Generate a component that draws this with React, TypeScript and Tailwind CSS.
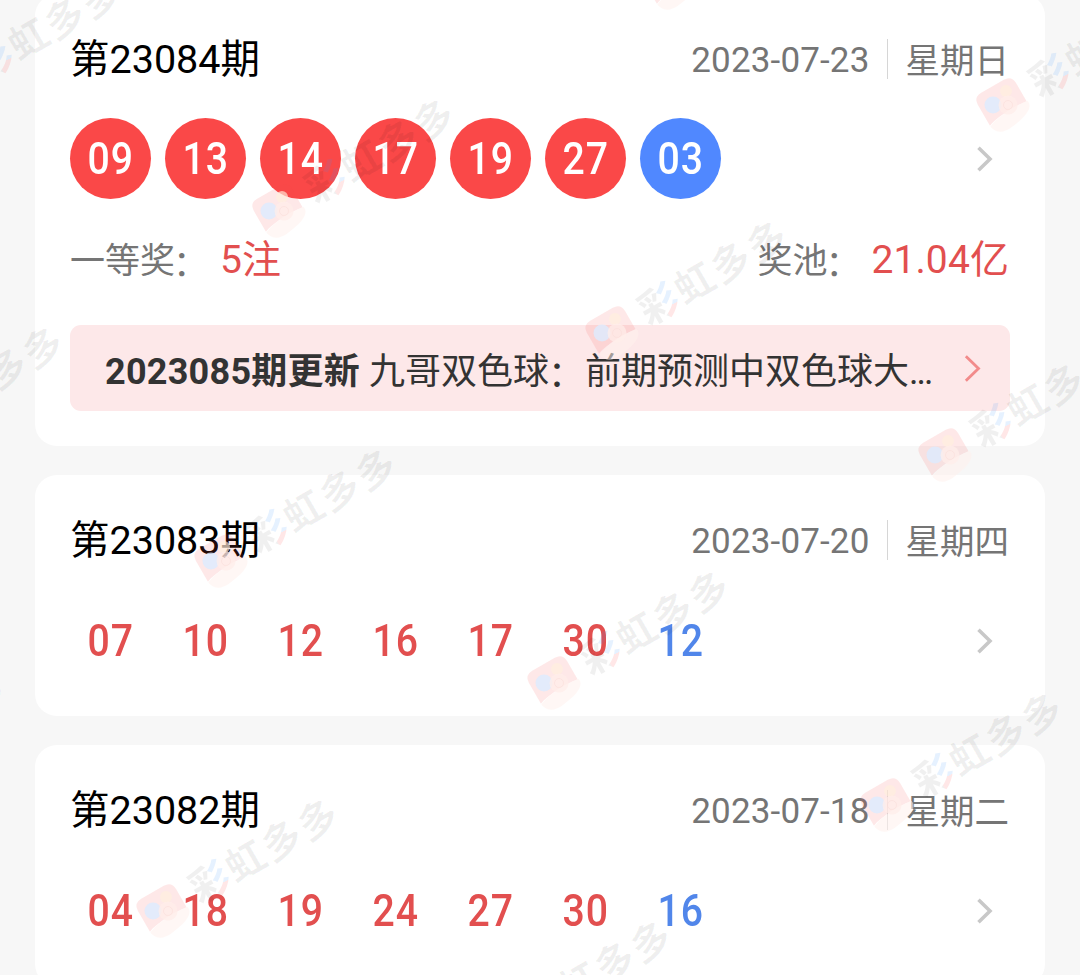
import React from "react";

type Draw = {
  issue: string;
  date: string;
  weekday: string;
  red: string[];
  blue: string;
};

const latest: Draw = {
  issue: "第23084期",
  date: "2023-07-23",
  weekday: "星期日",
  red: ["09", "13", "14", "17", "19", "27"],
  blue: "03",
};

const history: Draw[] = [
  {
    issue: "第23083期",
    date: "2023-07-20",
    weekday: "星期四",
    red: ["07", "10", "12", "16", "17", "30"],
    blue: "12",
  },
  {
    issue: "第23082期",
    date: "2023-07-18",
    weekday: "星期二",
    red: ["04", "18", "19", "24", "27", "30"],
    blue: "16",
  },
];

function Chevron({ className }: { className: string }) {
  return (
    <svg viewBox="0 0 18 30" className={className} fill="none" stroke="currentColor">
      <path d="M2.5 3.8 L14 15 L2.5 26.2" />
    </svg>
  );
}

function DrawHeader({ draw }: { draw: Draw }) {
  return (
    <div className="flex h-[50px] items-center justify-between">
      <h2 className="pt-[2px] text-[39.5px] leading-[50px] text-black">{draw.issue}</h2>
      <div className="flex items-center text-[35px] leading-[50px] text-[#757575]">
        <span className="pt-[4px] tracking-[0.15px]">{draw.date}</span>
        <span className="mr-[18px] ml-[17px] h-10 w-px bg-[#d6d6d6]" />
        <span className="mr-[1px] pt-[4px] text-[34.5px]">{draw.weekday}</span>
      </div>
    </div>
  );
}

function Numbers({ draw, filled }: { draw: Draw; filled?: boolean }) {
  const base =
    "flex size-[81px] items-center justify-center rounded-full text-[43.5px] font-medium leading-none tracking-[1px]";
  const red = filled ? "bg-[#fa4848] text-white" : "text-[#e24f4f]";
  const blue = filled ? "bg-[#5088ff] text-white" : "text-[#5186ea]";
  return (
    <div className="flex items-center justify-between">
      <div className="flex gap-[14px]">
        {draw.red.map((n) => (
          <span key={n} className={`${base} ${red}`}>
            <span className="scale-x-90 pt-[3px] pl-[1px]">{n}</span>
          </span>
        ))}
        <span className={`${base} ${blue}`}>
          <span className="scale-x-90 pt-[3px] pl-[1px]">{draw.blue}</span>
        </span>
      </div>
      <Chevron className="mr-[16px] h-[30px] w-[18px] stroke-[3.6] text-[#c8c8c8]" />
    </div>
  );
}

function WatermarkLogo() {
  return (
    <svg viewBox="-32 -32 64 64" className="absolute -top-8 -left-8 size-16">
      <g transform="rotate(-30)">
        <path
          d="M-13 -17 H13 Q22 -17 22 -8 V13 C10 11 -14 12 -22 16 V-8 Q-22 -17 -13 -17Z"
          fill="#fb4b4b"
          fillOpacity="0.13"
        />
        <path d="M-22 17 C-14 12 10 11 23 13 C25 21 15 26 -4 28 C-14 29 -20 26 -22 17Z" fill="#fff0ed" fillOpacity="0.55" />
      </g>
      <circle cx="5" cy="-10" r="6" fill="#fff0dd" fillOpacity="0.65" />
      <circle cx="-8" cy="4" r="8.5" fill="#dcebff" fillOpacity="0.8" />
      <circle cx="7" cy="4" r="9.5" fill="#ffeee9" fillOpacity="0.75" />
      <circle cx="7" cy="4" r="4.5" fill="none" stroke="#f9dcd8" strokeOpacity="0.5" />
    </svg>
  );
}

const marks = [
  [-56, 85],
  [277, 207],
  [610, 329],
  [943, 451],
  [668, -21],
  [1001, 101],
  [-114, 435],
  [219, 557],
  [552, 679],
  [885, 801],
  [-172, 785],
  [161, 907],
  [494, 1029],
];

function Watermarks() {
  return (
    <div className="pointer-events-none absolute inset-0 overflow-hidden" aria-hidden="true">
      {marks.map(([x, y]) => (
        <div key={`${x},${y}`} className="absolute size-0" style={{ left: x, top: y }}>
          <WatermarkLogo />
          <div className="absolute top-0 left-0 origin-top-left rotate-[-30deg]">
            <div className="-mt-[21px] ml-[35px] flex gap-[2px] text-[39.5px] leading-[50px] font-bold text-black/[0.06]">
              <span className="bg-[linear-gradient(rgba(0,0,0,0.06),rgba(0,0,0,0.06)),linear-gradient(rgba(60,150,255,0.13)_62%,rgba(255,70,70,0.13)_62%)] bg-[length:58%_100%,42%_100%] bg-[position:left,right] bg-no-repeat bg-clip-text text-transparent">
                彩
              </span>
              <span>虹</span>
              <span>多</span>
              <span>多</span>
            </div>
          </div>
        </div>
      ))}
    </div>
  );
}

export default function App() {
  return (
    <div className="relative h-[975px] w-[1080px] overflow-hidden bg-[#f7f7f7] font-[Roboto,'Noto_Sans_CJK_SC',sans-serif]">
      <main className="-mt-[6px] flex flex-col gap-[29px] px-[35px]">
        <section className="rounded-[22px] bg-white px-[35px] pt-10 pb-[35px]">
          <DrawHeader draw={latest} />
          <div className="mt-[34px]">
            <Numbers draw={latest} filled />
          </div>
          <div className="mt-[36px] flex h-[50px] items-center justify-between text-[35px] leading-[50px] text-[#757575]">
            <div className="flex items-center">
              <span className="pt-[4px]">
                一等奖<span className="-ml-[2px] inline-block translate-y-[3px]">：</span>
              </span>
              <span className="ml-[12px] text-[39px] text-[#e24f4f]">5注</span>
            </div>
            <div className="flex items-center">
              <span className="pt-[4px]">
                奖池<span className="-ml-[2px] inline-block translate-y-[3px]">：</span>
              </span>
              <span className="mr-[1px] ml-[11px] text-[39px] tracking-[0.1px] text-[#e24f4f]">21.04亿</span>
            </div>
          </div>
          <div className="mt-10 flex h-[86px] items-center justify-between rounded-[11px] bg-[#fde8e9] pr-[27px] pl-[35px] text-[36px] text-[#333]">
            <p className="pt-[7px] whitespace-nowrap">
              <b className="font-bold tracking-[0.25px]">2023085期更新</b> 九哥双色球
              <span className="mr-[1px] -ml-[1px] inline-block translate-y-[3px]">：</span>前期预测中双色球大
              <span className="tracking-[-2px]">...</span>
            </p>
            <Chevron className="h-[33px] w-[20px] stroke-[2.6] text-[#f28b8b]" />
          </div>
        </section>
        {history.map((draw) => (
          <section key={draw.issue} className="rounded-[22px] bg-white px-[35px] pt-10 pb-[35px]">
            <DrawHeader draw={draw} />
            <div className="mt-[35px]">
              <Numbers draw={draw} />
            </div>
          </section>
        ))}
      </main>
      <Watermarks />
    </div>
  );
}
